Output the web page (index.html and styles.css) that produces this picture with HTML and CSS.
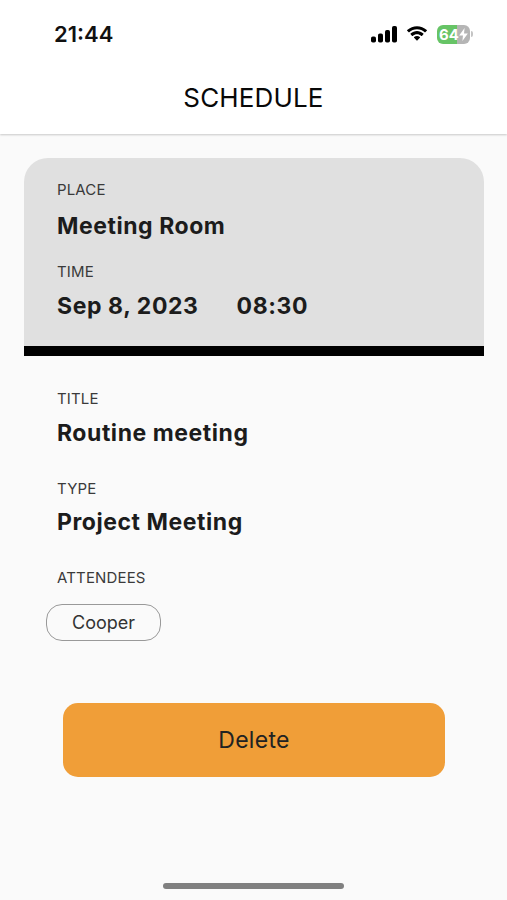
FILE: index.html
```html
<!DOCTYPE html>
<html lang="en">
<head>
<meta charset="utf-8">
<title>Schedule</title>
<link rel="stylesheet" href="styles.css">
</head>
<body>
<header class="top">
  <div class="status">
    <span class="clock">21:44</span>
    <div class="indicators">
      <svg class="signal" width="26" height="17" viewBox="0 0 26 17"><rect x="0" y="10.500" width="5" height="6" rx="1.800"/><rect x="7" y="7.500" width="5" height="9" rx="1.800"/><rect x="14" y="4" width="5" height="12.500" rx="1.800"/><rect x="21" y="0" width="5" height="16.500" rx="1.800"/></svg>
      <svg class="wifi" width="22" height="16" viewBox="0 0 22 16"><path d="M11 3.200c3 0 5.700 1.200 7.700 3.100.2.200.4.200.6 0l1.500-1.500c.2-.2.2-.5 0-.7C15.300-1.100 6.700-1.100 1.200 4.100c-.2.200-.2.500 0 .7l1.500 1.500c.2.200.4.200.6 0C5.300 4.400 8 3.200 11 3.200z"/><path d="M11 8.200c1.600 0 3.100.6 4.300 1.700.2.200.4.200.6 0l1.500-1.600c.2-.2.2-.5 0-.7-3.600-3.400-9.200-3.400-12.800 0-.2.200-.2.500 0 .7l1.500 1.600c.2.200.4.200.6 0 1.200-1.100 2.700-1.700 4.300-1.700z"/><path d="M13.900 11.800c.2-.2.2-.5 0-.7-1.700-1.400-4.100-1.400-5.800 0-.2.200-.2.500 0 .7l2.600 2.700c.2.200.4.200.6 0z"/></svg>
      <div class="power">
        <div class="battery"><span class="level">64</span><svg class="bolt" width="9" height="13" viewBox="0 0 8 12"><path d="M5 0 0 7h3.500L3 12l5-7H4.500z"/></svg></div>
        <div class="nub"></div>
      </div>
    </div>
  </div>
  <h1 class="heading">SCHEDULE</h1>
</header>
<main class="page">
  <section class="card">
    <div class="label">PLACE</div>
    <div class="value place">Meeting Room</div>
    <div class="label">TIME</div>
    <div class="value when"><span class="date">Sep 8, 2023</span><span class="hour">08:30</span></div>
  </section>
  <section class="details">
    <div class="label">TITLE</div>
    <div class="value">Routine meeting</div>
    <div class="label">TYPE</div>
    <div class="value">Project Meeting</div>
    <div class="label">ATTENDEES</div>
    <div class="chip"><span>Cooper</span></div>
  </section>
  <button class="delete"><span>Delete</span></button>
</main>
<div class="home"></div>
</body>
</html>
```
FILE: styles.css
```css
* { box-sizing: border-box; }
body { margin: 0; height: 900px; display: flex; flex-direction: column; background: #fafafa; color: #1c1c1c; font-family: Inter, sans-serif; overflow: hidden; }
.top { height: 134px; background: #fff; box-shadow: 0 1px 2px rgba(0,0,0,.2); }
.status { height: 68px; padding: 0 34px 0 54px; display: flex; align-items: center; justify-content: space-between; }
.clock { font-size: 22px; font-weight: 600; color: #111; }
.indicators { display: flex; align-items: center; gap: 9px; }
.power { display: flex; align-items: center; gap: 1px; }
.battery { width: 33px; height: 19px; border-radius: 6px; display: flex; align-items: center; justify-content: center; background: linear-gradient(90deg, #67c466 62%, #b5b5b5 62%); color: #fff; font-size: 15px; font-weight: 700; }
.bolt { fill: #fff; }
.nub { width: 2px; height: 6px; border-radius: 0 2px 2px 0; background: #c4c4c4; }
.heading { margin: 0; text-align: center; font-size: 26px; line-height: 60px; font-weight: 400; color: #080808; letter-spacing: .15px; }
.page { flex: 1; padding: 24px 23px 0 24px; }
.card { height: 198px; padding: 22px 33px 0; background: #e0e0e0; border-bottom: 10px solid #000; border-radius: 24px 24px 0 0; }
.label { height: 20px; line-height: 20px; font-size: 15px; letter-spacing: .15px; color: #3a3a3a; }
.value { height: 30px; line-height: 30px; font-size: 23px; font-weight: 650; letter-spacing: .55px; white-space: nowrap; }
.card .place { margin: 11px 0 21px; }
.card .when { display: flex; gap: 38px; margin-top: 9px; letter-spacing: .6px; }
.details { padding: 33px 33px 0; }
.details .value { margin: 8.500px 0 31px; }
.chip { width: 115px; height: 37px; margin: 16px 0 0 -11px; border: 1.5px solid #999; border-radius: 16px; display: flex; align-items: center; justify-content: center; font-size: 18px; letter-spacing: 0; color: #333; }
.delete { display: flex; align-items: center; justify-content: center; width: 382px; height: 74px; margin: 62px 0 0 39px; padding: 0; border: 0; border-radius: 15px; background: #f09e38; font: 400 23px Inter, sans-serif; letter-spacing: .3px; color: #222; }
.home { width: 181px; height: 6px; margin: 0 auto 11px; border-radius: 3px; background: #808080; }
```
